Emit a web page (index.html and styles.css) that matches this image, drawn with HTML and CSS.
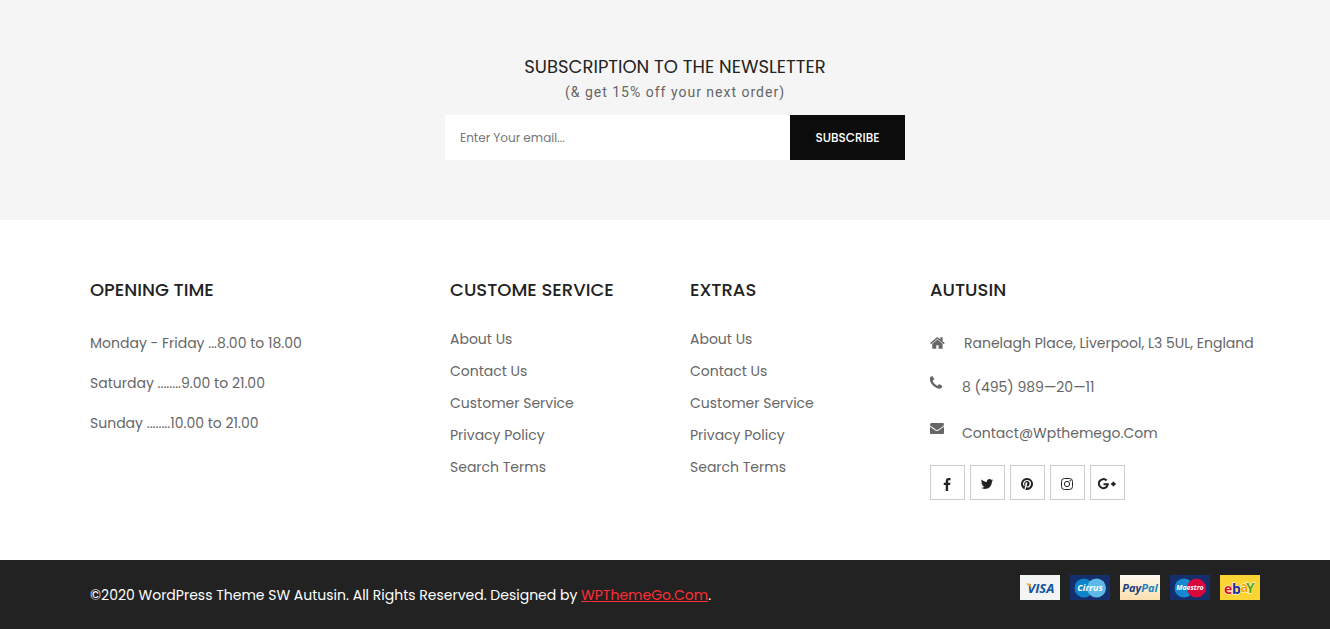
FILE: index.html
```html
<!DOCTYPE html>
<html lang="en">
<head>
    <meta charset="UTF-8">
    <meta name="viewport" content="width=device-width, initial-scale=1.0">
    <title>Autusin</title>
    <link rel="stylesheet" href="styles.css">
</head>
<body>
    <section class="newsletter">
        <h2>Subscription to the newsletter</h2>
        <p>(&amp; get 15% off your next order)</p>
        <form class="newsletter-form">
            <input type="email" name="email" placeholder="Enter Your email..." aria-label="Email">
            <button type="submit">Subscribe</button>
        </form>
    </section>

    <footer>
        <div class="footer-top">
            <div class="container footer-columns">
                <div class="column">
                    <h3>Opening Time</h3>
                    <ul class="opening">
                        <li>Monday - Friday ...8.00 to 18.00</li>
                        <li>Saturday ........9.00 to 21.00</li>
                        <li>Sunday ........10.00 to 21.00</li>
                    </ul>
                </div>
                <div class="column">
                    <h3>Custome Service</h3>
                    <ul class="links">
                        <li><a href="#">About Us</a></li>
                        <li><a href="#">Contact Us</a></li>
                        <li><a href="#">Customer Service</a></li>
                        <li><a href="#">Privacy Policy</a></li>
                        <li><a href="#">Search Terms</a></li>
                    </ul>
                </div>
                <div class="column">
                    <h3>Extras</h3>
                    <ul class="links">
                        <li><a href="#">About Us</a></li>
                        <li><a href="#">Contact Us</a></li>
                        <li><a href="#">Customer Service</a></li>
                        <li><a href="#">Privacy Policy</a></li>
                        <li><a href="#">Search Terms</a></li>
                    </ul>
                </div>
                <div class="column">
                    <h3>Autusin</h3>
                    <ul class="contact">
                        <li>
                            <svg class="icon-large" viewBox="64 0 1792 1792"><path d="M1472 992v480q0 26-19 45t-45 19h-384v-384h-256v384h-384q-26 0-45-19t-19-45v-480q0-1 .5-3t.5-3l575-474 575 474q1 2 1 6zm223-69l-62 74q-8 9-21 11h-3q-13 0-21-7l-692-577-692 577q-12 8-24 7-13-2-21-11l-62-74q-8-10-7-23.500t11-21.500l719-599q32-26 76-26t76 26l244 204v-195q0-14 9-23t23-9h192q14 0 23 9t9 23v408l219 182q10 8 11 21.500t-7 23.500z"/></svg>
                            <span>Ranelagh Place, Liverpool, L3 5UL, England</span>
                        </li>
                        <li class="phone">
                            <svg class="icon-large" viewBox="224 0 1792 1792"><path d="M1600 1240q0 27-10 70.500t-21 68.500q-21 50-122 106-94 51-186 51-27 0-53-3.500t-57.500-12.500-47-14.500-55.500-20.500-49-18q-98-35-175-83-127-79-264-216t-216-264q-48-77-83-175-3-9-18-49t-20.500-55.500-14.500-47-12.500-57.500-3.500-53q0-92 51-186 56-101 106-122 25-11 68.500-21t70.500-10q14 0 21 3 18 6 53 76 11 19 30 54t35 63.500 31 53.500q3 4 17.500 25t21.500 35.500 7 28.500q0 20-28.500 50t-62 55-62 53-28.500 46q0 9 5 22.500t8.500 20.500 14 24 11.500 19q76 137 174 235t235 174q2 1 19 11.500t24 14 20.500 8.500 22.500 5q18 0 46-28.500t53-62 55-62 50-28.500q14 0 28.500 7t35.500 21.500 25 17.500q25 15 53.500 31t63.500 35 54 30q70 35 76 53 3 7 3 21z"/></svg>
                            <span>8 (495) 989—20—11</span>
                        </li>
                        <li class="mail">
                            <svg class="icon" viewBox="0 0 1792 1792"><path d="M1792 710v794q0 66-47 113t-113 47h-1472q-66 0-113-47t-47-113v-794q44 49 101 87 362 246 497 345 57 42 92.500 65.500t94.500 48 110 24.500h2q51 0 110-24.500t94.500-48 92.500-65.500q170-123 498-345 57-39 100-87zm0-294q0 79-49 151t-122 123q-376 261-468 325-10 7-42.500 31t-54 38.500-52 32.500-57.500 27-50 9h-2q-23 0-50-9t-57.500-27-52-32.500-54-38.500-42.500-31q-91-64-262-182.500t-205-142.500q-62-42-117-115.500t-55-136.500q0-78 41.500-130t118.500-52h1472q65 0 112.500 47t47.500 113z"/></svg>
                            <a href="#">Contact@Wpthemego.Com</a>
                        </li>
                    </ul>
                    <div class="social">
                        <a href="#" aria-label="Facebook">
                            <svg class="icon" viewBox="0 0 1792 1792"><path d="M1343 140v264h-157q-86 0-116 36t-30 108v189h293l-39 296h-254v759h-306v-759h-255v-296h255v-218q0-186 104-288.500t277-102.500q147 0 228 12z"/></svg>
                        </a>
                        <a href="#" aria-label="Twitter">
                            <svg class="icon" viewBox="0 0 1792 1792"><path d="M1684 408q-67 98-162 167 1 14 1 42 0 130-38 259.500t-115.500 248.500-184.500 210.500-258 146-323 54.500q-271 0-496-145 35 4 78 4 225 0 401-138-105-2-188-64.500t-114-159.500q33 5 61 5 43 0 85-11-112-23-185.500-111.500t-73.500-205.500v-4q68 38 146 41-66-44-105-115t-39-154q0-88 44-163 121 149 294.500 238.500t371.500 99.500q-8-38-8-74 0-134 94.500-228.500t228.500-94.500q140 0 236 102 109-21 205-78-37 115-142 178 93-10 186-50z"/></svg>
                        </a>
                        <a href="#" aria-label="Pinterest">
                            <svg class="icon" viewBox="0 0 1792 1792"><path d="M1664 896q0 209-103 385.500t-279.500 279.500-385.500 103q-111 0-218-32 59-93 78-164 9-34 54-211 20 39 73 67.500t114 28.500q121 0 216-68.500t147-188.500 52-270q0-114-59.500-214t-172.500-163-255-63q-105 0-196 29t-154.500 77-109 110.500-67 129.500-21.500 134q0 104 40 183t117 111q30 12 38-20 2-7 8-31t8-30q6-23-11-43-51-61-51-151 0-151 104.500-259.500t273.500-108.500q151 0 235.500 82t84.500 213q0 170-68.500 289t-175.500 119q-61 0-98-43.500t-23-104.500q8-35 26.500-93.500t30-103 11.500-75.500q0-50-27-83t-77-33q-62 0-105 57t-43 142q0 73 25 122l-99 418q-17 70-13 177-206-91-333-281t-127-423q0-209 103-385.500t279.500-279.500 385.500-103 385.500 103 279.500 279.500 103 385.500z"/></svg>
                        </a>
                        <a href="#" aria-label="Instagram">
                            <svg class="icon outline" viewBox="0 0 14 14"><rect x="1.500" y="1.500" width="11" height="11" rx="3"/><circle cx="7" cy="7" r="2.600"/><circle class="dot" cx="10.200" cy="3.800" r=".75"/></svg>
                        </a>
                        <a href="#" aria-label="Google Plus">
                            <svg class="icon-wide outline" viewBox="0 0 18 14"><path class="thick" d="M8.600 3.500A4.500 4.500 0 1 0 9.800 7.300H5.500"/><path class="thick" d="M15.400 4.800v4.400M13.200 7h4.400"/></svg>
                        </a>
                    </div>
                </div>
            </div>
        </div>

        <div class="footer-bottom">
            <div class="container copyright">
                <p>©2020 WordPress Theme SW Autusin. All Rights Reserved. Designed by <a href="#">WPThemeGo.Com</a>.</p>
                <div class="payments">
                    <svg viewBox="0 0 40 25" role="img" aria-label="Visa">
                        <rect width="40" height="25" fill="#f4f4f4"/>
                        <text class="visa" x="21" y="18" text-anchor="middle">VISA</text>
                        <path d="M6 8.500h3.500q1 0 1.300 1.500l.8 3.500Q9.500 10 6 9z" fill="#e8a92c"/>
                    </svg>
                    <svg viewBox="0 0 40 25" role="img" aria-label="Cirrus">
                        <rect width="40" height="25" fill="#142f6b"/>
                        <circle cx="14" cy="13" r="9.500" fill="#0d83c9"/>
                        <circle cx="26.500" cy="13" r="9.500" fill="#5db9e8"/>
                        <text class="cirrus" x="20" y="16" text-anchor="middle">Cirrus</text>
                    </svg>
                    <svg viewBox="0 0 40 25" role="img" aria-label="PayPal">
                        <defs>
                            <linearGradient id="cream" x1="0" y1="0" x2="0" y2="1">
                                <stop offset="0" stop-color="#fffaf0"/>
                                <stop offset="1" stop-color="#fbdfae"/>
                            </linearGradient>
                        </defs>
                        <rect width="40" height="25" fill="url(#cream)"/>
                        <text class="paypal" x="20" y="17" text-anchor="middle">Pay<tspan fill="#1684c4">Pal</tspan></text>
                    </svg>
                    <svg viewBox="0 0 40 25" role="img" aria-label="Maestro">
                        <rect width="40" height="25" fill="#142f6b"/>
                        <circle cx="14" cy="13" r="9.500" fill="#1489cf"/>
                        <circle cx="26.500" cy="13" r="9.500" fill="#d8073a"/>
                        <text class="maestro" x="20" y="15" text-anchor="middle">Maestro</text>
                    </svg>
                    <svg viewBox="0 0 40 25" role="img" aria-label="eBay">
                        <rect width="40" height="25" fill="#fbd333"/>
                        <text class="ebay" y="19"><tspan x="4" fill="#e00b18">e</tspan><tspan x="12" fill="#1b2b96">b</tspan><tspan x="20" y="17" fill="#f5a800">a</tspan><tspan x="26" y="18" fill="#5aa616">Y</tspan></text>
                    </svg>
                </div>
            </div>
        </div>
    </footer>
</body>
</html>
```
FILE: styles.css
```css
* {
    margin: 0;
    padding: 0;
    box-sizing: border-box;
}

body {
    background-color: #fff;
    color: #666;
    font-family: Poppins, Inter, sans-serif;
    font-size: 14px;
    line-height: 24px;
}

ul {
    list-style: none;
}

a {
    color: inherit;
    text-decoration: none;
}

.newsletter {
    padding: 55px 0 60px 20px;
    background-color: #f5f5f5;
    text-align: center;
}

.newsletter h2 {
    color: #222;
    font-size: 18px;
    font-weight: 400;
    text-transform: uppercase;
}

.newsletter p {
    font-family: Roboto, sans-serif;
    letter-spacing: 1px;
    line-height: 26px;
}

.newsletter-form {
    display: flex;
    max-width: 460px;
    margin: 10px auto 0;
}

.newsletter-form input {
    flex: 1;
    min-width: 0;
    height: 45px;
    padding: 0 15px;
    border: none;
    background-color: #fff;
    font-family: inherit;
    font-size: 12px;
}

.newsletter-form input::placeholder {
    color: #777;
}

.newsletter-form button {
    width: 115px;
    height: 45px;
    border: none;
    background-color: #0c0c0c;
    color: #fff;
    font-family: inherit;
    font-size: 12px;
    font-weight: 500;
    text-transform: uppercase;
    cursor: pointer;
}

.footer-top,
.footer-bottom {
    padding-left: 20px;
}

.container {
    max-width: 1200px;
    margin: 0 auto;
}

.footer-columns {
    display: grid;
    grid-template-columns: 3fr 2fr 2fr 3fr;
    padding: 58px 0 60px;
}

.column {
    padding-left: 15px;
}

.column h3 {
    margin-bottom: 21px;
    color: #222;
    font-size: 18px;
    font-weight: 500;
    text-transform: uppercase;
}

.opening li {
    line-height: 40px;
}

.links li {
    line-height: 32px;
}

.contact {
    padding-top: 8px;
}

.contact li {
    display: flex;
    align-items: center;
    gap: 18px;
    margin-bottom: 20px;
    white-space: nowrap;
}

.contact .phone,
.contact .mail {
    align-items: flex-start;
}

.contact .phone {
    gap: 16px;
    margin-bottom: 22px;
}

.icon {
    width: 14px;
    height: 14px;
    fill: currentColor;
}

.icon-large {
    width: 16px;
    height: 16px;
    fill: currentColor;
}

.icon-wide {
    width: 18px;
    height: 14px;
}

.outline {
    fill: none;
    stroke: currentColor;
}

.outline .dot {
    fill: currentColor;
    stroke: none;
}

.outline .thick {
    stroke-width: 2;
}

.social {
    display: flex;
    gap: 5px;
}

.social a {
    display: flex;
    align-items: center;
    justify-content: center;
    width: 35px;
    height: 35px;
    padding: 2px 1px 0 0;
    border: 1px solid #ccc;
    color: #222;
}

.footer-bottom {
    background-color: #222;
    color: #fff;
}

.copyright {
    display: flex;
    justify-content: space-between;
    padding: 15px 15px 22px;
}

.copyright p {
    padding-top: 8px;
}

.copyright a {
    color: #ff2d37;
    text-decoration: underline;
}

.payments {
    display: flex;
    gap: 10px;
}

.payments svg {
    width: 40px;
    height: 25px;
}

.payments text {
    fill: #fff;
    font-family: "Open Sans", sans-serif;
    font-style: italic;
    font-weight: 700;
}

.payments .visa {
    fill: #10539b;
    font-size: 13px;
}

.payments .cirrus {
    font-size: 9px;
}

.payments .paypal {
    fill: #1b3e7c;
    font-size: 11px;
}

.payments .maestro {
    font-size: 7px;
}

.payments .ebay {
    font-size: 14px;
    font-style: normal;
    stroke: #fff;
    stroke-width: 1px;
    paint-order: stroke;
}
```
